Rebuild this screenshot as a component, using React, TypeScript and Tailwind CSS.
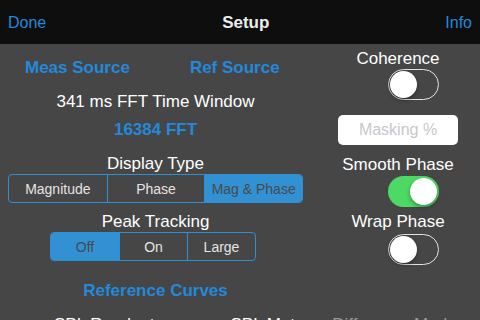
import React from 'react';

function Toggle({ on }: { on?: boolean }) {
  return (
    <div
      className={
        on
          ? 'ml-[72px] w-[51px] h-[31px] rounded-full bg-[#4cd964] flex items-center justify-end p-[2px]'
          : 'ml-[72px] w-[51px] h-[31px] rounded-full border-[1.5px] border-[#e3e3e3] flex items-center justify-start p-[1px]'
      }
    >
      <div className="w-[27px] h-[27px] rounded-full bg-white shadow-[0_2px_4px_rgba(0,0,0,0.35)]" />
    </div>
  );
}

function Segmented({ items, active, width }: { items: string[]; active: number; width: string }) {
  return (
    <div className={`${width} h-[29px] grid grid-cols-3 rounded-[4px] border border-[#2f8fd3] overflow-hidden`}>
      {items.map((t, i) => (
        <div
          key={t}
          className={
            (i === active ? 'bg-[#3191d3] text-[#4a4a4a] ' : 'text-[#e4e4e4] ') +
            (i > 0 ? 'border-l border-[#2f8fd3] ' : '') +
            'flex items-center justify-center text-[14px]'
          }
        >
          {t}
        </div>
      ))}
    </div>
  );
}

export default function App() {
  return (
    <div className="w-[480px] h-[320px] overflow-hidden bg-[#464646] font-['Liberation_Sans',Arial,sans-serif]">
      {/* Nav bar */}
      <div className="h-11 bg-[#0e0e0e] flex items-center justify-between px-2">
        <span className="text-[16px] text-[#2389db] pt-[2px]">Done</span>
        <span className="text-[17px] font-semibold text-[#ececec] pt-[1px]">Setup</span>
        <span className="text-[16px] text-[#2389db] pt-[2px]">Info</span>
      </div>

      <div className="flex">
        {/* Left column */}
        <div className="w-[311px] flex flex-col items-center text-[17px] leading-[20px]">
          <div className="self-start pl-[25px] mt-[14px] flex gap-[60px] font-bold text-[#2389db]">
            <span>Meas Source</span>
            <span>Ref Source</span>
          </div>
          <div className="mt-[14px] text-white">341 ms FFT Time Window</div>
          <div className="mt-[8px] font-bold text-[#2389db]">16384 FFT</div>
          <div className="mt-[14px] text-white">Display Type</div>
          <div className="mt-0">
            <Segmented items={['Magnitude', 'Phase', 'Mag & Phase']} active={2} width="w-[295px]" />
          </div>
          <div className="mt-[9px] text-white">Peak Tracking</div>
          <div className="self-start ml-[50px]">
            <Segmented items={['Off', 'On', 'Large']} active={0} width="w-[206px]" />
          </div>
          <div className="mt-[20px] font-bold text-[#2389db]">Reference Curves</div>
        </div>

        {/* Right column */}
        <div className="flex-1 pl-[5px] flex flex-col text-[17px] leading-[20px] text-white">
          <div className="mt-[5px] text-center">Coherence</div>
          <Toggle />
          <div className="mt-[15px] ml-[22px] w-[120px] h-[30px] rounded-[5px] bg-white flex items-center justify-center text-[16px] text-[#c7c7cd]">
            Masking %
          </div>
          <div className="mt-[10px] text-center">Smooth Phase</div>
          <div className="mt-[1px]">
            <Toggle on />
          </div>
          <div className="mt-[5px] text-center">Wrap Phase</div>
          <div className="mt-[2px]">
            <Toggle />
          </div>
        </div>
      </div>

      {/* Bottom row, cut off */}
      <div className="mt-[14px] flex text-[17px] leading-[20px]">
        <span className="ml-[54px] text-white">SPL Readout</span>
        <span className="ml-[76px] text-white">SPL Meter</span>
        <span className="ml-[22px] text-[#9a9a9a]">Difference Mode</span>
      </div>
    </div>
  );
}
